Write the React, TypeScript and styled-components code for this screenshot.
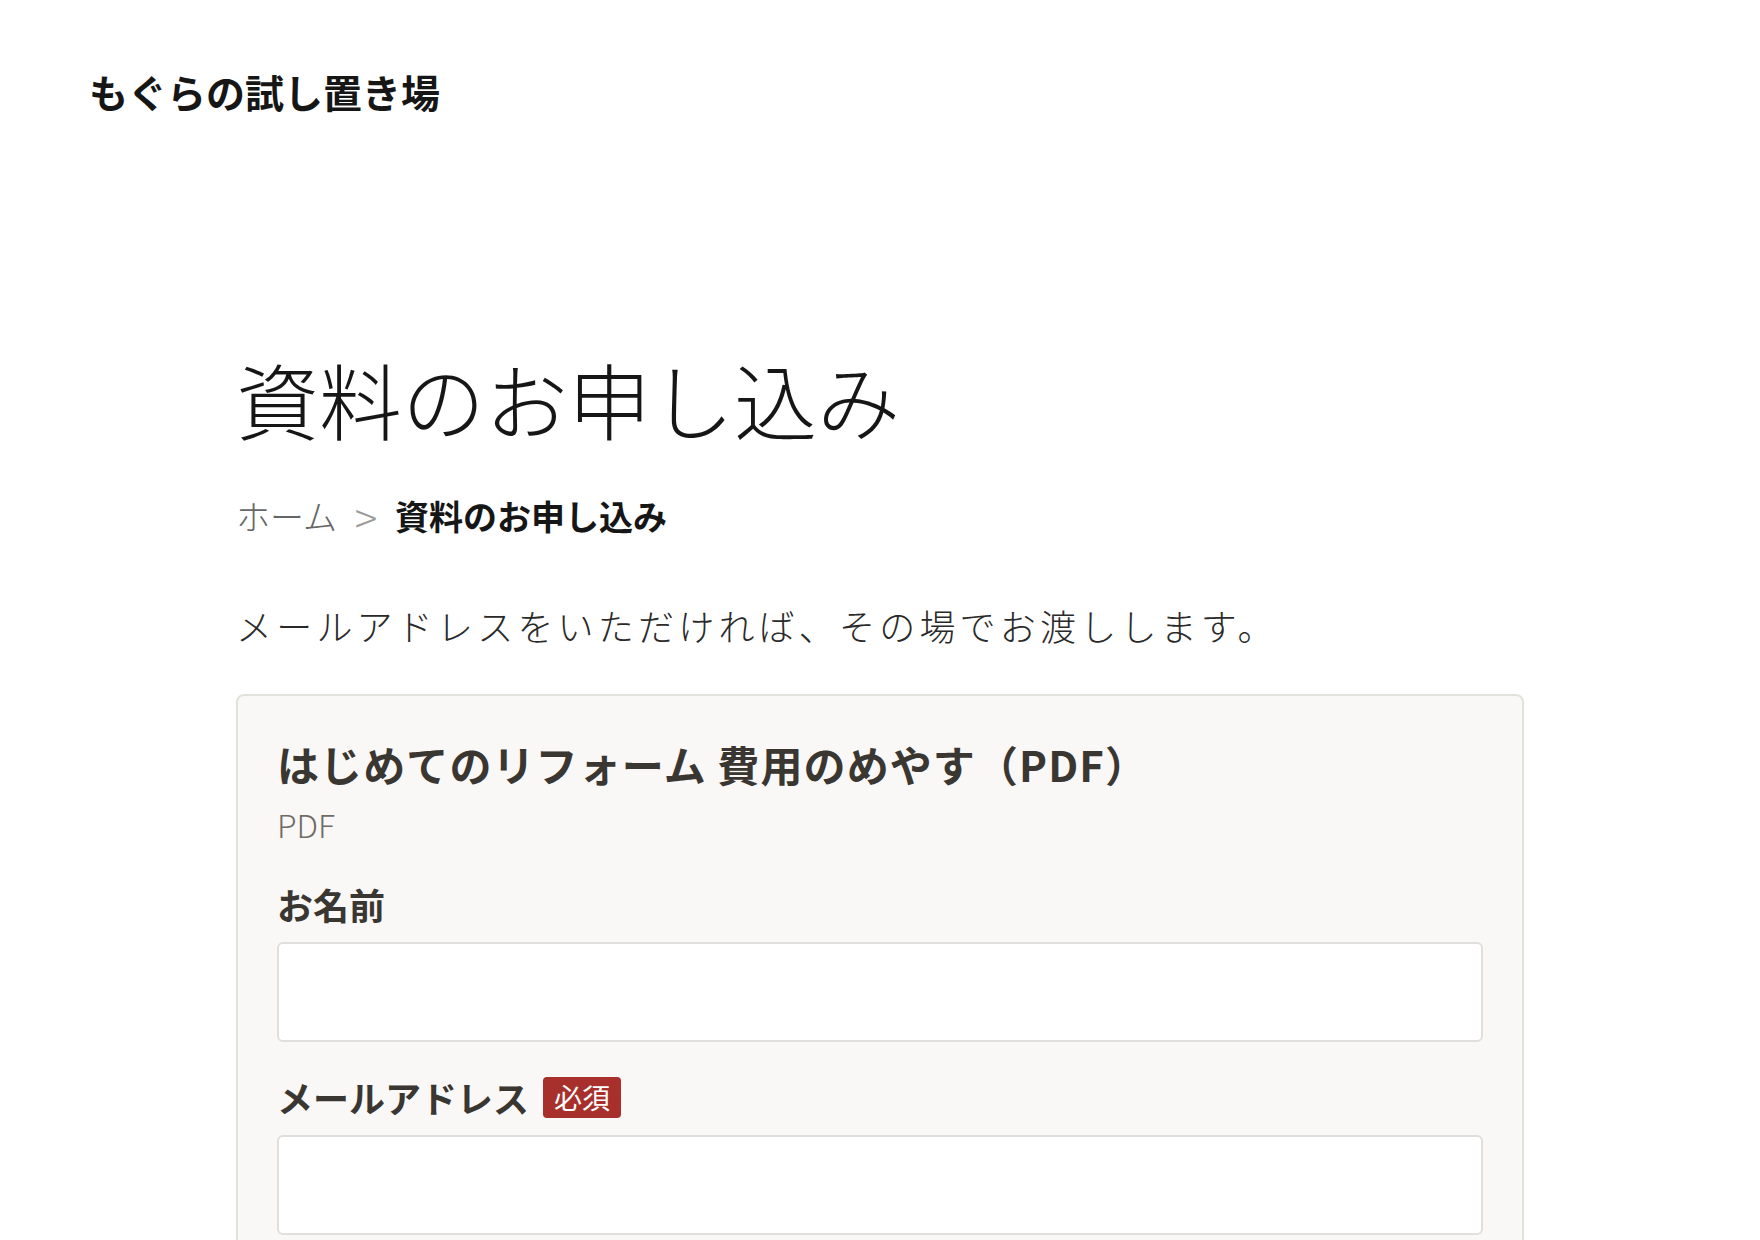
import React from "react";
import styled, { createGlobalStyle } from "styled-components";

const GlobalStyle = createGlobalStyle`
  * { box-sizing: border-box; }
  html, body {
    margin: 0;
    padding: 0;
    background: #ffffff;
    font-family: "Noto Sans CJK JP", "Noto Sans", sans-serif;
    color: #1a1a1a;
  }
`;

const Header = styled.header`
  padding: 58px 89px 0;
`;

const SiteTitle = styled.div`
  font-size: 39px;
  line-height: 66px;
  font-weight: 700;
  color: #161616;
`;

const Main = styled.main`
  width: 1288px;
  margin: 220px auto 0;
`;

const PageTitle = styled.h1`
  margin: 0;
  font-size: 83px;
  line-height: 109px;
  font-weight: 300;
  color: #161616;
`;

const Breadcrumb = styled.nav`
  margin-top: 37px;
  display: flex;
  align-items: center;
  font-size: 34px;
  line-height: 51px;
`;

const Crumb = styled.span<{ $current?: boolean }>`
  font-weight: ${(p) => (p.$current ? 700 : 300)};
  color: ${(p) => (p.$current ? "#161616" : "#666")};
`;

const Sep = styled.span`
  display: inline-flex;
  justify-content: center;
  width: 58px;
  font-size: 42px;
  line-height: 51px;
  font-weight: 300;
  color: #9a9a9a;
`;

const Lead = styled.p`
  margin: 57px 0 0;
  font-size: 36px;
  line-height: 54px;
  font-weight: 300;
  letter-spacing: 4.2px;
  color: #2a2a2a;
`;

const Card = styled.section`
  margin-top: 42px;
  background: #f9f8f6;
  border: 2px solid #e3e1dc;
  border-radius: 8px;
  padding: 38px 39px 40px;
`;

const CardTitle = styled.h2`
  margin: 0;
  font-size: 42px;
  line-height: 59px;
  font-weight: 700;
  letter-spacing: 1.1px;
  color: #3a3631;
`;

const CardMeta = styled.div`
  margin-top: 7px;
  font-size: 32px;
  line-height: 48px;
  font-weight: 300;
  color: #716b65;
`;

const Field = styled.div<{ $first?: boolean }>`
  margin-top: ${(p) => (p.$first ? "29px" : "28px")};
  display: flex;
  flex-direction: column;
  gap: 11px;
`;

const LabelRow = styled.label`
  display: flex;
  align-items: center;
  gap: 14px;
  font-size: 36px;
  line-height: 54px;
  font-weight: 700;
  color: #3a3631;
`;

const Required = styled.span`
  display: inline-flex;
  align-items: center;
  justify-content: center;
  height: 41px;
  padding: 0 11px;
  border-radius: 4px;
  background: #a7302c;
  color: #ffffff;
  font-size: 28px;
  line-height: 1;
  font-weight: 400;
`;

const Input = styled.input`
  display: block;
  width: 100%;
  height: 100px;
  border: 2px solid #e1dfdb;
  border-radius: 6px;
  background: #ffffff;
  font-size: 32px;
  padding: 0 20px;
  font-family: inherit;
  outline: none;
`;

export default function App() {
  return (
    <>
      <GlobalStyle />
      <Header>
        <SiteTitle>もぐらの試し置き場</SiteTitle>
      </Header>
      <Main>
        <PageTitle>資料のお申し込み</PageTitle>
        <Breadcrumb>
          <Crumb>ホーム</Crumb>
          <Sep>&gt;</Sep>
          <Crumb $current>資料のお申し込み</Crumb>
        </Breadcrumb>
        <Lead>メールアドレスをいただければ、その場でお渡しします。</Lead>
        <Card>
          <CardTitle>はじめてのリフォーム 費用のめやす（PDF）</CardTitle>
          <CardMeta>PDF</CardMeta>
          <Field $first>
            <LabelRow htmlFor="name">お名前</LabelRow>
            <Input id="name" type="text" />
          </Field>
          <Field>
            <LabelRow htmlFor="email">
              メールアドレス
              <Required>必須</Required>
            </LabelRow>
            <Input id="email" type="email" />
          </Field>
        </Card>
      </Main>
    </>
  );
}
